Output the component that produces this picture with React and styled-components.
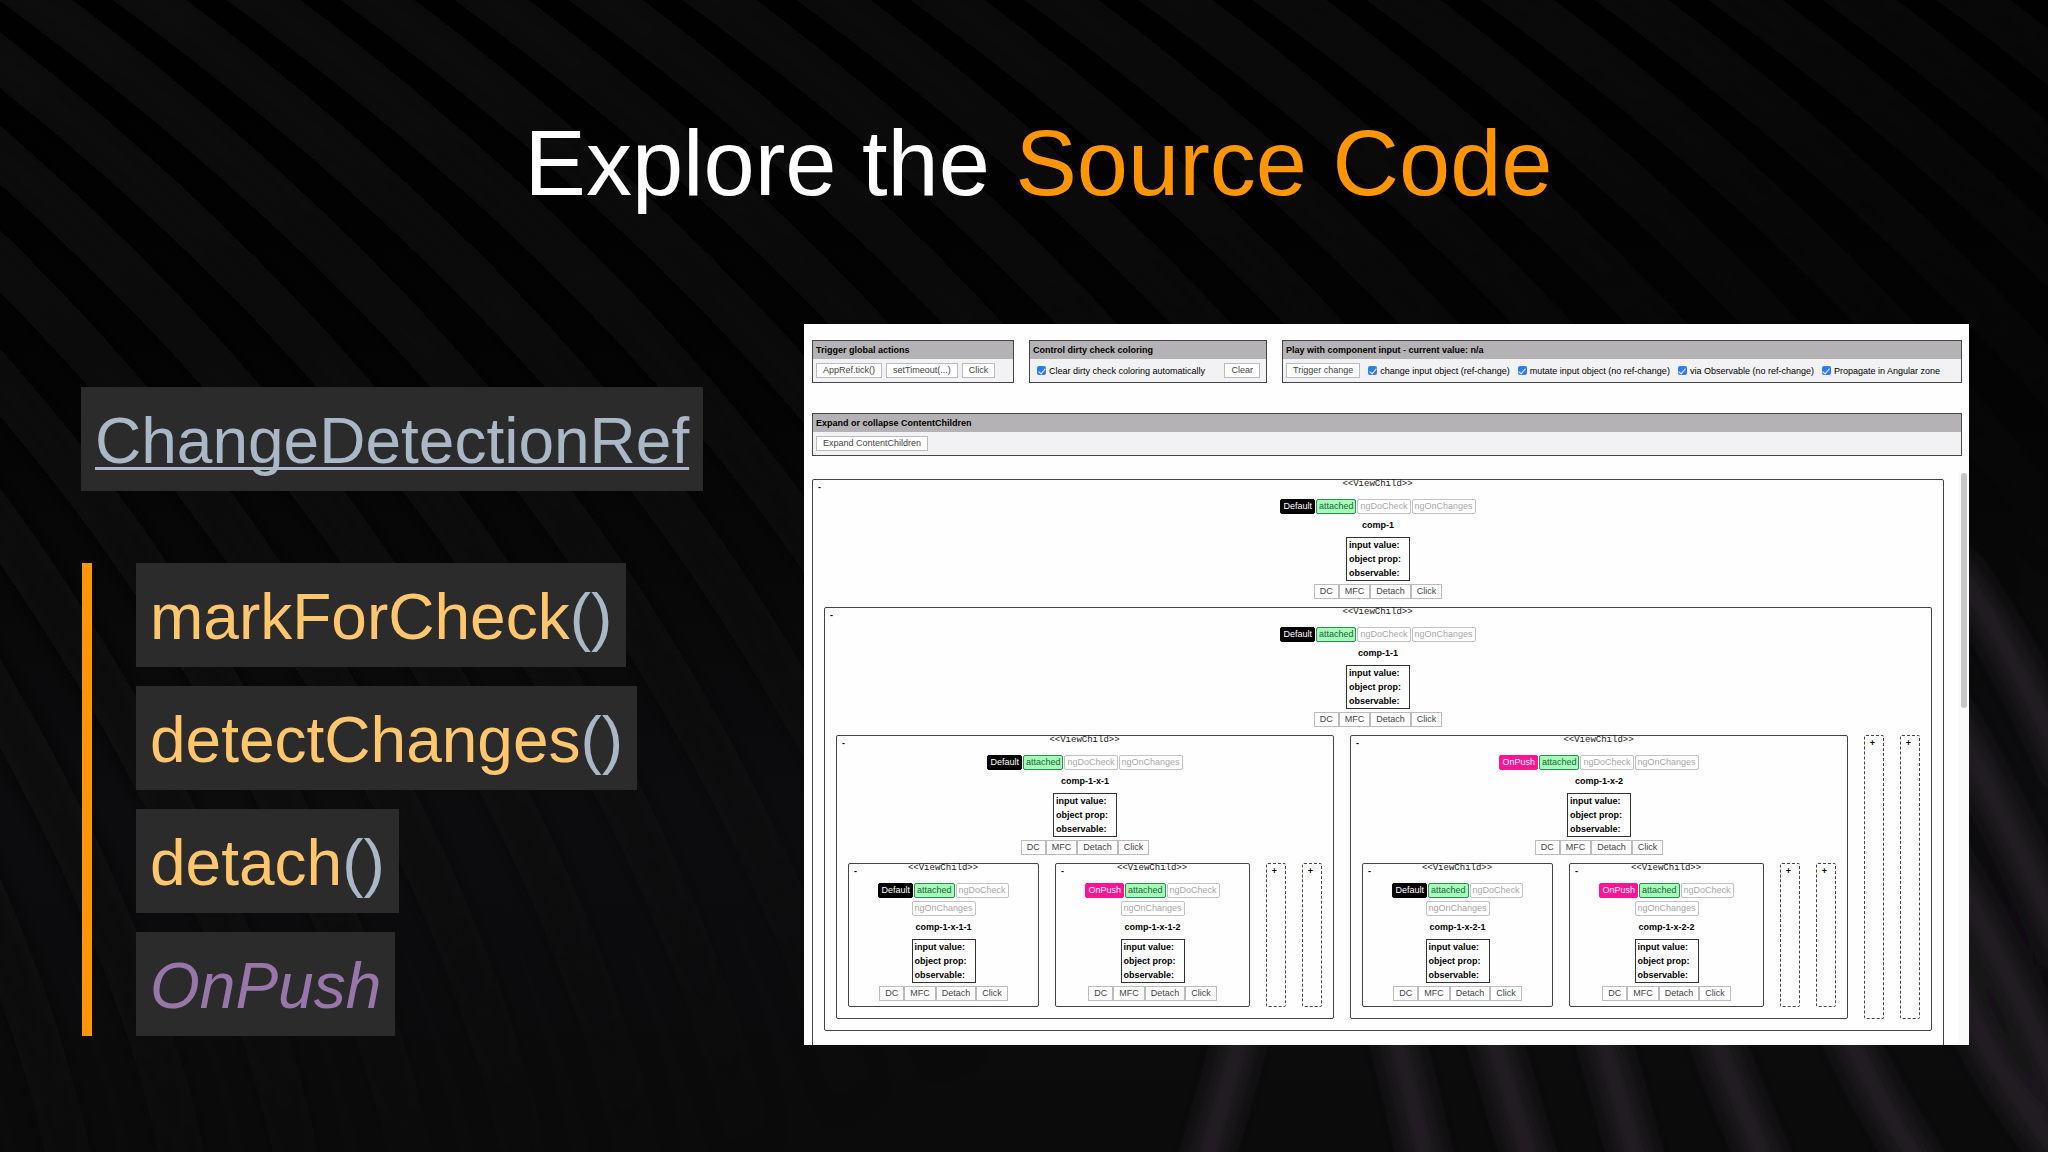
import React from "react";
import styled, { createGlobalStyle, css } from "styled-components";

const GlobalStyle = createGlobalStyle`
	* {
		box-sizing: border-box;
	}

	body {
		margin: 0;
		background: #000;
		font-family: "Liberation Sans", Arial, sans-serif;
	}
`;

const Slide = styled.main`
	position: relative;
	overflow: hidden;
	min-height: 100vh;
	padding: 110px 79px 0 81px;
	background: linear-gradient(#020202, #040404 30%, #0d0d0f 70%, #0b0b0c);
`;

const Backdrop = styled.svg`
	position: absolute;
	inset: 0;
	width: 100%;
	height: 100%;
`;

const Title = styled.h1`
	position: relative;
	margin: 0 0 108px;
	padding-left: 27px;
	color: #fff;
	font-size: 92px;
	font-weight: 400;
	line-height: 106px;
	text-align: center;
`;

const Accent = styled.span`
	color: #ff9500;
`;

const Columns = styled.div`
	position: relative;
	display: grid;
	grid-template-columns: 723fr 1165fr;
	align-items: start;
`;

const Api = styled.section`
	display: flex;
	flex-direction: column;
	align-items: flex-start;
	gap: 72px;
	padding-top: 63px;
`;

const chip = css`
	display: block;
	padding: 4px 14px 0;
	background: #2b2b2b;
	font-size: 64px;
	line-height: 100px;
`;

const ClassLink = styled.a`
	${chip}
	color: #a9b7c6;
	text-decoration: underline;
	text-decoration-thickness: 3px;
	text-underline-offset: 4px;
	text-decoration-skip-ink: none;
`;

const Methods = styled.ul`
	display: flex;
	flex-direction: column;
	align-items: flex-start;
	gap: 19px;
	margin: 0 0 0 1px;
	padding: 0 0 0 44px;
	border-left: 10px solid #ff9500;
	list-style: none;
`;

const Method = styled.li`
	${chip}
	color: #ffc66d;
`;

const Parens = styled.span`
	color: #a9b7c6;
`;

const Strategy = styled.li`
	${chip}
	color: #9876aa;
	font-style: italic;
`;

const Demo = styled.section`
	display: flex;
	flex-direction: column;
	overflow: hidden;
	aspect-ratio: 1165 / 721;
	padding: 16px 0 0 8px;
	background: #fefefe;
	color: #000;
	font-size: 9px;
	line-height: 12px;
`;

const Toolbar = styled.div`
	display: grid;
	grid-template-columns: 202fr 238fr 680fr;
	gap: 15px;
	margin: 0 7px 30px 0;
`;

const Box = styled.section`
	border: 1px solid #454447;
	background: #f2f1f3;
`;

const BoxTitle = styled.h2`
	margin: 0;
	padding: 0 3px;
	background: #b4b2b4;
	font-size: 9px;
	line-height: 18px;
`;

const BoxBody = styled.div`
	display: flex;
	align-items: center;
	gap: 4px;
	height: 23px;
	padding: 0 3px;
	white-space: nowrap;
`;

const Button = styled.button`
	height: 15px;
	padding: 0 ${(p) => (p.$small ? 5 : 6)}px;
	border: 1px solid #bcbbbe;
	background: #fff;
	color: #444;
	font: 9px/13px "Liberation Sans", Arial, sans-serif;
`;

const ClearButton = styled(Button)`
	margin: 0 3px 0 auto;
`;

const Label = styled.label`
	display: flex;
	align-items: center;
	gap: 3px;
	margin-left: 4px;
`;

const Checkbox = styled.input`
	appearance: none;
	display: grid;
	place-items: center;
	width: 9px;
	height: 9px;
	margin: 0;
	border-radius: 2px;
	background: #2e7cf6;

	&:checked::before {
		content: "";
		width: 3px;
		height: 6px;
		margin-bottom: 1px;
		border: solid #fff;
		border-width: 0 1px 1px 0;
		transform: rotate(40deg);
	}
`;

const ExpandBox = styled(Box)`
	margin: 0 7px 17px 0;
`;

const Scroller = styled.div`
	display: grid;
	grid-template-columns: 1fr 11px;
	gap: 14px;
	flex: 1;
	min-height: 0;
`;

const Tree = styled.div`
	overflow: hidden;
	padding-top: 6px;
`;

const Track = styled.div`
	padding-left: 3px;
	background: #fafafa;
`;

const Thumb = styled.div`
	width: 6px;
	height: 235px;
	border-radius: 3px;
	background: #c6c5c7;
`;

const Panel = styled.article`
	flex: 1 1 auto;
	min-width: 0;
	padding-bottom: ${(p) => (p.$leaf ? 5 : p.$root ? 30 : 11)}px;
	border: 1px solid #454447;
	border-radius: 2px;
	text-align: center;
`;

const Collapsed = styled.article`
	display: flex;
	flex: 0 0 20px;
	align-items: flex-start;
	justify-content: center;
	padding-right: 3px;
	border: 1px dashed #454447;
	border-radius: 2px;
`;

const Head = styled.div`
	display: grid;
	grid-template-columns: 1fr auto 1fr;
	height: 19px;
	padding: 0 6px 0 5px;
`;

const Toggle = styled.button`
	justify-self: start;
	height: 12px;
	margin-top: 1px;
	padding: 0;
	border: 0;
	background: none;
	color: #000;
	font: bold 9px/12px "Liberation Sans", Arial, sans-serif;
`;

const Kind = styled.span`
	color: #222;
	font: 9px/9px "Liberation Mono", "Courier New", monospace;
`;

const Tags = styled.div`
	display: flex;
	flex-wrap: wrap;
	justify-content: center;
	gap: 3px 1px;
`;

const tones = {
	default: ["#000", "#000", "#fff"],
	push: ["#ff1493", "#ff1493", "#fff"],
	attached: ["#a6fcba", "#2f8f4c", "#17682f"],
	idle: ["#fff", "#c2c1c4", "#a8a7aa"],
};

const Tag = styled.span`
	padding: 0 2px;
	border: 1px solid ${(p) => tones[p.$tone][1]};
	border-radius: 2px;
	background: ${(p) => tones[p.$tone][0]};
	color: ${(p) => tones[p.$tone][2]};
	line-height: 13px;
`;

const Name = styled.h3`
	margin: 5px 0 6px;
	font-size: 9px;
	line-height: 12px;
`;

const Values = styled.table`
	margin: 0 auto 3px;
	border: 1px solid #333;
	border-spacing: 2px 0;
	line-height: 14px;

	th,
	td {
		padding: 0;
		text-align: left;
	}

	td {
		width: 4px;
	}
`;

const Actions = styled.div`
	display: flex;
	justify-content: center;
`;

const Children = styled.div`
	display: flex;
	gap: 16px;
	margin: 8px 11px 0;
`;

// two expanded branches followed by two collapsed ones
const leaves = (parent) => [
	{ name: `${parent}-1` },
	{ name: `${parent}-2`, push: true },
	{ collapsed: true },
	{ collapsed: true },
];

const tree = {
	name: "comp-1",
	children: [
		{
			name: "comp-1-1",
			children: [
				{ name: "comp-1-x-1", children: leaves("comp-1-x-1") },
				{ name: "comp-1-x-2", push: true, children: leaves("comp-1-x-2") },
				{ collapsed: true },
				{ collapsed: true },
			],
		},
	],
};

const Node = ({ node, root }) => {
	if (node.collapsed) {
		return (
			<Collapsed>
				<Toggle>+</Toggle>
			</Collapsed>
		);
	}

	return (
		<Panel $root={root} $leaf={!node.children}>
			<Head>
				<Toggle>-</Toggle>
				<Kind>{"<<ViewChild>>"}</Kind>
			</Head>
			<Tags>
				<Tag $tone={node.push ? "push" : "default"}>
					{node.push ? "OnPush" : "Default"}
				</Tag>
				<Tag $tone="attached">attached</Tag>
				<Tag $tone="idle">ngDoCheck</Tag>
				<Tag $tone="idle">ngOnChanges</Tag>
			</Tags>
			<Name>{node.name}</Name>
			<Values>
				<tbody>
					{["input value:", "object prop:", "observable:"].map((label) => (
						<tr key={label}>
							<th scope="row">{label}</th>
							<td />
						</tr>
					))}
				</tbody>
			</Values>
			<Actions>
				{["DC", "MFC", "Detach", "Click"].map((action) => (
					<Button key={action} $small>
						{action}
					</Button>
				))}
			</Actions>
			{node.children && (
				<Children>
					{node.children.map((child, i) => (
						<Node key={i} node={child} />
					))}
				</Children>
			)}
		</Panel>
	);
};

const Check = ({ children }) => (
	<Label>
		<Checkbox type="checkbox" defaultChecked />
		{children}
	</Label>
);

const folds = Array.from({ length: 28 }, (_, i) => -1005 + i * 114);

// x at the top and x at the bottom of each bright fold
const brightFolds = [
	[1395, 1430],
	[1490, 1536],
	[1600, 1642],
	[1710, 1774],
	[1840, 1930],
	[1970, 2080],
];

const Folds = () => (
	<Backdrop viewBox="0 0 2048 1152" preserveAspectRatio="none" aria-hidden="true">
		<defs>
			<filter id="soft" x="-20%" y="-20%" width="140%" height="140%">
				<feGaussianBlur stdDeviation="13" />
			</filter>
			<linearGradient id="fade" x1="0" y1="0" x2="0.8" y2="1">
				<stop offset="0" stopColor="#fff" />
				<stop offset="0.4" stopColor="#bbb" />
				<stop offset="0.8" stopColor="#000" />
			</linearGradient>
			<mask id="upper">
				<rect width="2048" height="1152" fill="url(#fade)" />
			</mask>
		</defs>
		<g mask="url(#upper)">
			<g fill="none" stroke="#101011" strokeWidth="44" filter="url(#soft)">
				{folds.map((x) => (
					<path key={x} d={`M${x - 40} -40 Q${x + 380} 260 ${x + 600} 600 T${x + 860} 1240`} />
				))}
			</g>
		</g>
		<g fill="none" stroke="#252427" strokeWidth="28" filter="url(#soft)">
			<path d="M1245 1020 Q1230 1080 1200 1180" />
			{brightFolds.map(([top, bottom]) => (
				<path key={top} d={`M${top - 20} 960 Q${top + 10} 1060 ${bottom} 1180`} />
			))}
			<path d="M1950 560 Q2010 640 2070 780" />
			<path d="M1940 700 Q2000 800 2070 960" />
			<path d="M1940 850 Q2000 950 2070 1110" />
		</g>
	</Backdrop>
);

const App = () => (
	<Slide>
		<GlobalStyle />
		<Folds />
		<Title>
			Explore the <Accent>Source Code</Accent>
		</Title>
		<Columns>
			<Api>
				<ClassLink href="#change-detection-ref">ChangeDetectionRef</ClassLink>
				<Methods>
					{["markForCheck", "detectChanges", "detach"].map((name) => (
						<Method key={name}>
							{name}
							<Parens>()</Parens>
						</Method>
					))}
					<Strategy>OnPush</Strategy>
				</Methods>
			</Api>
			<Demo>
				<Toolbar>
					<Box>
						<BoxTitle>Trigger global actions</BoxTitle>
						<BoxBody>
							<Button>AppRef.tick()</Button>
							<Button>setTimeout(...)</Button>
							<Button>Click</Button>
						</BoxBody>
					</Box>
					<Box>
						<BoxTitle>Control dirty check coloring</BoxTitle>
						<BoxBody>
							<Check>Clear dirty check coloring automatically</Check>
							<ClearButton>Clear</ClearButton>
						</BoxBody>
					</Box>
					<Box>
						<BoxTitle>Play with component input - current value: n/a</BoxTitle>
						<BoxBody>
							<Button>Trigger change</Button>
							<Check>change input object (ref-change)</Check>
							<Check>mutate input object (no ref-change)</Check>
							<Check>via Observable (no ref-change)</Check>
							<Check>Propagate in Angular zone</Check>
						</BoxBody>
					</Box>
				</Toolbar>
				<ExpandBox>
					<BoxTitle>Expand or collapse ContentChildren</BoxTitle>
					<BoxBody>
						<Button>Expand ContentChildren</Button>
					</BoxBody>
				</ExpandBox>
				<Scroller>
					<Tree>
						<Node node={tree} root />
					</Tree>
					<Track>
						<Thumb />
					</Track>
				</Scroller>
			</Demo>
		</Columns>
	</Slide>
);

export default App;
